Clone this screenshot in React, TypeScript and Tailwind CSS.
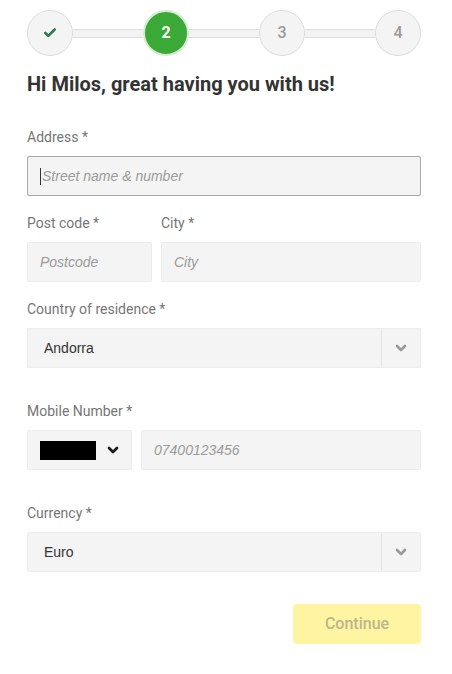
import { Check, ChevronDown } from 'lucide-react';

const steps = [1, 2, 3, 4];

function Step({ n }: { n: number }) {
  if (n === 1) {
    return (
      <div className="w-[46px] h-[46px] shrink-0 rounded-full border border-[#dcdcdc] bg-[#f4f4f4] flex items-center justify-center">
        <Check className="w-[14px] h-[14px] text-[#2a7a55]" strokeWidth={4.5} />
      </div>
    );
  }
  if (n === 2) {
    return (
      <div className="w-[46px] h-[46px] shrink-0 rounded-full border-2 border-[#d3ebd0] bg-[#3aa935] flex items-center justify-center text-white text-[16px] font-bold">
        2
      </div>
    );
  }
  return (
    <div className="w-[46px] h-[46px] shrink-0 rounded-full border border-[#dcdcdc] bg-[#f4f4f4] flex items-center justify-center text-[#9a9a9a] text-[16px] font-medium">
      {n}
    </div>
  );
}

function Label({ children }: { children: React.ReactNode }) {
  return <div className="text-[14px] leading-[18px] text-[#767676] mb-[10px]">{children}</div>;
}

function Select({ value }: { value: string }) {
  return (
    <div className="h-[40px] flex bg-[#f4f4f4] border border-[#ececec] rounded-[2px]">
      <div className="flex-1 flex items-center pl-[16px] text-[14px] text-[#333] font-['Liberation_Sans',Arial,sans-serif]">
        {value}
      </div>
      <div className="w-[39px] border-l border-[#e4e4e4] flex items-center justify-center">
        <ChevronDown className="w-[16px] h-[16px] text-[#9a9a9a]" strokeWidth={4} />
      </div>
    </div>
  );
}

function Placeholder({ text, caret }: { text: string; caret?: boolean }) {
  return (
    <span className="flex items-center italic text-[14px] text-[#9b9b9b] font-['Liberation_Sans',Arial,sans-serif]">
      {caret && <span className="w-px h-[17px] bg-[#333] mr-px" />}
      {text}
    </span>
  );
}

export default function App() {
  return (
    <div className="w-[452px] h-[674px] bg-white pl-[27px] pr-[31px] pt-[10px] font-['Roboto',sans-serif]">
      <div className="flex items-center">
        {steps.map((n, i) => (
          <div key={n} className={i === 0 ? 'flex items-center' : 'flex items-center flex-1'}>
            {i > 0 && <div className="flex-1 h-[9px] bg-[#f3f3f3] border-y border-[#dedede]" />}
            <Step n={n} />
          </div>
        ))}
      </div>

      <h1 className="mt-[16px] text-[20px] leading-[24px] font-bold text-[#333]">
        Hi Milos, great having you with us!
      </h1>

      <div className="mt-[32px]">
        <Label>Address *</Label>
        <div className="h-[40px] flex items-center pl-[12px] bg-[#f4f4f4] border border-[#aaaaaa] rounded-[2px]">
          <Placeholder text="Street name & number" caret />
        </div>
      </div>

      <div className="mt-[18px] flex gap-[9px]">
        <div className="w-[125px]">
          <Label>Post code *</Label>
          <div className="h-[40px] flex items-center pl-[12px] bg-[#f4f4f4] border border-[#ececec] rounded-[2px]">
            <Placeholder text="Postcode" />
          </div>
        </div>
        <div className="flex-1">
          <Label>City *</Label>
          <div className="h-[40px] flex items-center pl-[12px] bg-[#f4f4f4] border border-[#ececec] rounded-[2px]">
            <Placeholder text="City" />
          </div>
        </div>
      </div>

      <div className="mt-[18px]">
        <Label>Country of residence *</Label>
        <Select value="Andorra" />
      </div>

      <div className="mt-[34px]">
        <Label>Mobile Number *</Label>
        <div className="flex gap-[9px]">
          <div className="w-[105px] h-[40px] flex items-center pl-[12px] bg-[#f4f4f4] border border-[#ececec] rounded-[2px]">
            <div className="w-[56px] h-[19px] bg-black" />
            <ChevronDown className="ml-[9px] w-[16px] h-[16px] text-[#1a1a1a]" strokeWidth={4} />
          </div>
          <div className="flex-1 h-[40px] flex items-center pl-[12px] bg-[#f4f4f4] border border-[#ececec] rounded-[2px]">
            <Placeholder text="07400123456" />
          </div>
        </div>
      </div>

      <div className="mt-[34px]">
        <Label>Currency *</Label>
        <Select value="Euro" />
      </div>

      <div className="mt-[32px] flex justify-end">
        <button className="w-[128px] h-[40px] rounded-[4px] bg-[#fff4a2] text-[#bcb68e] text-[16px] font-medium">
          Continue
        </button>
      </div>
    </div>
  );
}
